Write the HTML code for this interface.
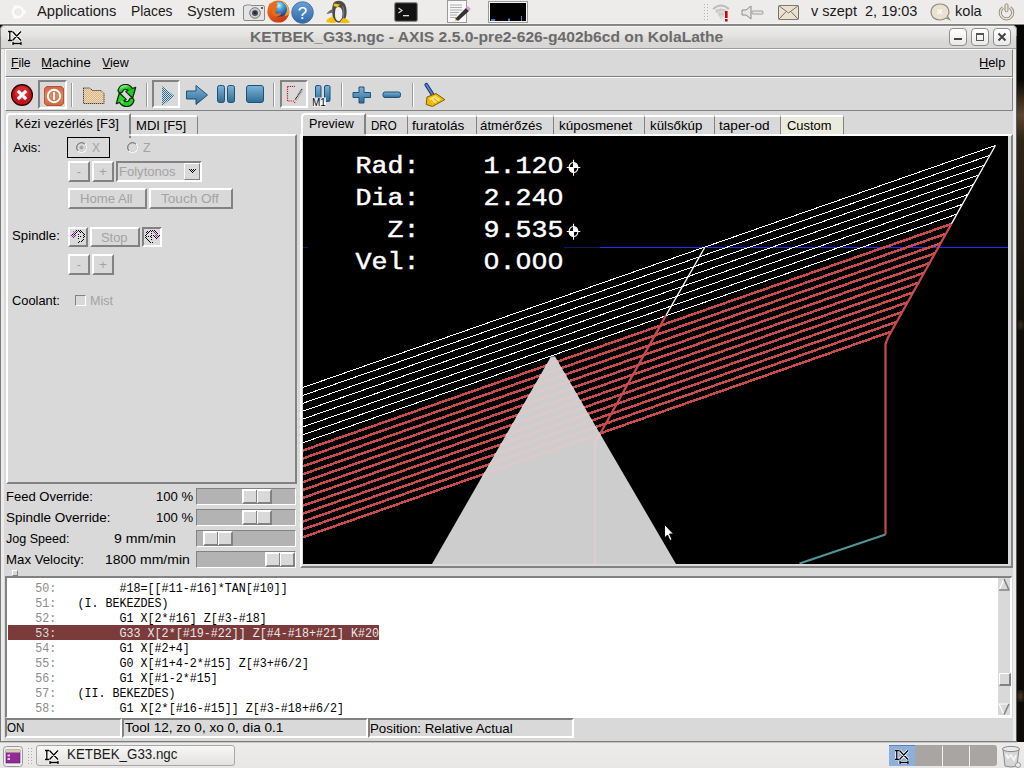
<!DOCTYPE html><html><head><meta charset="utf-8"><style>
*{margin:0;padding:0;box-sizing:content-box}
html,body{width:1024px;height:768px;overflow:hidden;background:#000}
body>div,body>svg{position:absolute}
.t{white-space:pre}
</style></head><body>
<div style="left:1017px;top:25px;width:7px;height:718px;background:linear-gradient(#050403 0px,#080604 55px,#3a2c1e 75px,#5a4630 90px,#2e2418 115px,#2a2016 150px,#1e1810 220px,#100c08 300px,#0a0806 450px,#0c0906 700px)"></div>
<div style="left:1017px;top:320px;width:7px;height:10px;background:radial-gradient(#3a2c1e,transparent)"></div>
<div style="left:1017px;top:690px;width:7px;height:12px;background:radial-gradient(#4a3828,transparent)"></div>
<div style="left:0px;top:0px;width:1024px;height:24px;background:#edecea"></div>
<div style="left:0px;top:23px;width:1024px;height:1px;background:#f4f3f2"></div>
<div style="left:0px;top:24px;width:1024px;height:1px;background:#85837f"></div>
<svg style="left:9px;top:3px" width="18" height="18" viewBox="0 0 18 18"><circle cx="9" cy="9" r="5.2" fill="none" stroke="#fbfbfb" stroke-width="2.4"/><circle cx="14.8" cy="9" r="1.9" fill="#fbfbfb"/><circle cx="6.1" cy="4" r="1.9" fill="#fbfbfb"/><circle cx="6.1" cy="14" r="1.9" fill="#fbfbfb"/></svg>
<div class="t" style="left:36.50px;top:3.66px;font-size:14.1px;line-height:14.1px;color:#1a1a1a;font-family:'Liberation Sans', sans-serif;font-weight:normal;transform:scaleX(1.0448);transform-origin:0 0;">Applications</div>
<div class="t" style="left:130.50px;top:3.66px;font-size:14.1px;line-height:14.1px;color:#1a1a1a;font-family:'Liberation Sans', sans-serif;font-weight:normal;transform:scaleX(0.9811);transform-origin:0 0;">Places</div>
<div class="t" style="left:186.80px;top:3.66px;font-size:14.1px;line-height:14.1px;color:#1a1a1a;font-family:'Liberation Sans', sans-serif;font-weight:normal;transform:scaleX(1.0208);transform-origin:0 0;">System</div>
<svg style="left:243px;top:3px" width="23" height="19" viewBox="0 0 23 19">
<rect x="0.5" y="2.5" width="21" height="15" rx="1.5" fill="#e4e4e4" stroke="#8a8a8a"/>
<rect x="3" y="1" width="5" height="2" fill="#bdbdbd"/>
<circle cx="12" cy="10" r="5.3" fill="#cfcfcf" stroke="#7a7a7a"/><circle cx="12" cy="10" r="3" fill="#4a4f57"/><rect x="10.5" y="8.5" width="3" height="2.4" fill="#1b2a55"/>
<circle cx="19" cy="5" r="1" fill="#333"/></svg>
<svg style="left:266px;top:0px" width="26" height="24" viewBox="0 0 26 24">
<defs><radialGradient id="gl" cx="0.45" cy="0.25" r="0.8"><stop offset="0" stop-color="#c8f2fc"/><stop offset="0.35" stop-color="#49a6e0"/><stop offset="0.75" stop-color="#1f5fb0"/><stop offset="1" stop-color="#0c2a78"/></radialGradient>
<linearGradient id="fx" x1="0" y1="0" x2="0.6" y2="1"><stop offset="0" stop-color="#f07a18"/><stop offset="0.6" stop-color="#e0561a"/><stop offset="1" stop-color="#c83a14"/></linearGradient>
<linearGradient id="fy" x1="0" y1="0" x2="0" y2="1"><stop offset="0" stop-color="#f4d040"/><stop offset="1" stop-color="#f08a20"/></linearGradient></defs>
<circle cx="12.3" cy="11.6" r="11" fill="url(#fx)"/>
<path d="M17 2 A11 11 0 0 1 22.8 15 L19 16 Z" fill="url(#fy)"/>
<circle cx="13.6" cy="9.2" r="7.4" fill="url(#gl)"/>
<path d="M2.5 6 L4 3 L6.5 4.5 L10 3 L11.5 5 L10 7.5 L12.5 8.5 L10 10 C8.5 11 9 13.5 11.5 13.8 L15.5 13 L14 15.5 L10 16.5 C7 16 5.5 13 6 10 L3 9Z" fill="#ea6a1c"/>
</svg>
<svg style="left:291px;top:1px" width="23" height="23" viewBox="0 0 23 23">
<defs><linearGradient id="hp" x1="0" y1="0" x2="0" y2="1"><stop offset="0" stop-color="#6aa0d6"/><stop offset="1" stop-color="#2f69a8"/></linearGradient></defs>
<circle cx="11.5" cy="11.5" r="10.8" fill="url(#hp)" stroke="#3467a0" stroke-width="0.8"/>
<text x="11.5" y="17.5" text-anchor="middle" font-family="Liberation Sans" font-size="17" fill="#fff">?</text></svg>
<svg style="left:324px;top:0px" width="28" height="24" viewBox="0 0 28 24">
<path d="M9 4 C10 1 15 0 18 1.5 C22 3.5 23 9 22.5 14 C22 19 20 22 16 22.5 C12 23 9 20 8.5 15 C8 11 8 7 9 4Z" fill="#4a4a4a"/>
<path d="M12 8 C14 6 17 7 18 10 C19 14 18.5 19 15.5 21 C13 21.5 11 19 11 15 C11 12 11 10 12 8Z" fill="#f0f0f0"/>
<path d="M18.5 6 C20 9 20 14 19 18" stroke="#777" stroke-width="1.2" fill="none"/>
<path d="M10 3.5 L16 4.5 L13.5 7.2 L9.5 6Z" fill="#f4c200"/>
<path d="M8.5 9 C6 10 3.5 12 2.5 14 C5 13.5 7 13 9 12.5Z" fill="#6a6a6a"/>
<path d="M2 21.5 C3 18.5 6 17 9 17 L12 22.5 C9 23.5 5 23 2 21.5Z" fill="#f5c000"/>
<path d="M15.5 22.5 L19 18 C22 18.5 25 20 26 22.5 C22.5 23.5 18.5 23.5 15.5 22.5Z" fill="#f5c000"/></svg>
<svg style="left:394px;top:2px" width="24" height="20" viewBox="0 0 24 20">
<rect x="0.5" y="0.5" width="23" height="19" rx="2" fill="#2b2b2b" stroke="#8a8a8a"/><rect x="2" y="2" width="20" height="16" fill="#111"/>
<path d="M4.5 6 L8 8.5 L4.5 11" fill="none" stroke="#ddd" stroke-width="1.2"/><rect x="9" y="13" width="6" height="1.3" fill="#ddd"/></svg>
<svg style="left:447px;top:0px" width="24" height="23" viewBox="0 0 24 23">
<rect x="0.5" y="0.5" width="19" height="22" fill="#f7f7f7" stroke="#9a9a9a"/>
<g stroke="#9a9a9a" stroke-width="0.8"><line x1="3" y1="5" x2="15" y2="5"/><line x1="3" y1="7.5" x2="15" y2="7.5"/><line x1="3" y1="10" x2="15" y2="10"/><line x1="3" y1="12.5" x2="12" y2="12.5"/><line x1="3" y1="15" x2="10" y2="15"/><line x1="3" y1="17.5" x2="9" y2="17.5"/></g>
<path d="M8 19 L19 8 L22 11 L11 21Z" fill="#333"/><path d="M19 8 L21 6 L24 9 L22 11Z" fill="#e89ad0"/><path d="M8 19 L11 21 L7.5 21.5Z" fill="#e8d070"/></svg>
<svg style="left:488px;top:1px" width="40" height="22" viewBox="0 0 40 22">
<rect x="0.5" y="0.5" width="39" height="21" fill="#f4f4f4" stroke="#9a9a9a"/><rect x="2" y="2" width="36" height="18" fill="#000"/>
<rect x="3" y="18" width="4" height="2" fill="#2a8fd8"/><rect x="20" y="17.5" width="2" height="2.5" fill="#2a8fd8"/><rect x="33" y="15" width="1" height="5" fill="#2a8fd8"/></svg>
<svg style="left:703px;top:3px" width="6" height="19" viewBox="0 0 6 19"><rect x="1" y="1" width="1" height="1" fill="#b8b6b3"/><rect x="1" y="4" width="1" height="1" fill="#b8b6b3"/><rect x="1" y="7" width="1" height="1" fill="#b8b6b3"/><rect x="1" y="10" width="1" height="1" fill="#b8b6b3"/><rect x="1" y="13" width="1" height="1" fill="#b8b6b3"/><rect x="1" y="16" width="1" height="1" fill="#b8b6b3"/><rect x="4" y="1" width="1" height="1" fill="#b8b6b3"/><rect x="4" y="4" width="1" height="1" fill="#b8b6b3"/><rect x="4" y="7" width="1" height="1" fill="#b8b6b3"/><rect x="4" y="10" width="1" height="1" fill="#b8b6b3"/><rect x="4" y="13" width="1" height="1" fill="#b8b6b3"/><rect x="4" y="16" width="1" height="1" fill="#b8b6b3"/></svg>
<svg style="left:711px;top:3px" width="22" height="19" viewBox="0 0 22 19">
<path d="M2 6 Q10 -1 18 6" fill="none" stroke="#bdbdbd" stroke-width="2"/><path d="M5 9 Q10 4 15 9" fill="none" stroke="#bdbdbd" stroke-width="2"/>
<path d="M7.5 12 Q10 10 12.5 12" fill="none" stroke="#bdbdbd" stroke-width="2"/><path d="M4 6 L10 17 L16 6" fill="#cfcfcf" opacity="0.7"/>
<rect x="14" y="8" width="2.6" height="7" fill="#d40000"/><rect x="14" y="16" width="2.6" height="2.5" fill="#d40000"/></svg>
<svg style="left:741px;top:5px" width="23" height="15" viewBox="0 0 23 15">
<path d="M1 5 L5 5 L10 1 L10 14 L5 10 L1 10Z" fill="#e6e6e4" stroke="#8a8a88"/><rect x="11" y="6" width="11" height="3" rx="1" fill="#e6e6e4" stroke="#8a8a88" stroke-width="0.8"/></svg>
<svg style="left:778px;top:5px" width="21" height="15" viewBox="0 0 21 17" preserveAspectRatio="none">
<rect x="0.5" y="0.5" width="20" height="16" rx="1" fill="#eae1cf" stroke="#6f6a62"/><path d="M1 1 L10.5 9 L20 1 M1 16 L8 7.5 M20 16 L13 7.5" fill="none" stroke="#6f6a62"/></svg>
<div class="t" style="left:811.00px;top:3.66px;font-size:14.1px;line-height:14.1px;color:#1a1a1a;font-family:'Liberation Sans', sans-serif;font-weight:normal;transform:scaleX(1.0290);transform-origin:0 0;">v szept  2, 19:03</div>
<svg style="left:930px;top:3px" width="21" height="19" viewBox="0 0 21 19">
<path d="M10 1 C4.5 1 1 4.5 1 9 C1 13.5 4.5 17 10 17 C13 17 14.5 16 16 15 L19.5 16.5 L17.3 13.2 C18.4 12 19 10.5 19 9 C19 4.5 15.5 1 10 1Z" fill="#ebe2cd" stroke="#8c8a85" stroke-width="1.2"/>
<path d="M7.5 6.5 L12 11 M12 6.5 L7.5 11" stroke="#fafafa" stroke-width="1.6"/></svg>
<div class="t" style="left:954.50px;top:3.66px;font-size:14.1px;line-height:14.1px;color:#1a1a1a;font-family:'Liberation Sans', sans-serif;font-weight:normal;transform:scaleX(1.0330);transform-origin:0 0;">kola</div>
<svg style="left:998px;top:3px" width="17" height="18" viewBox="0 0 17 18">
<path d="M5 4.5 A6.2 6.2 0 1 0 12 4.5" fill="none" stroke="#8f8b84" stroke-width="3.2"/><path d="M5 4.5 A6.2 6.2 0 1 0 12 4.5" fill="none" stroke="#ece3cf" stroke-width="1.4"/>
<rect x="7" y="0.8" width="3" height="8" rx="1.5" fill="#ece3cf" stroke="#8f8b84" stroke-width="1"/></svg>
<div style="left:0px;top:25px;width:6px;height:6px;background:#000"></div>
<div style="left:1011px;top:25px;width:6px;height:6px;background:#000"></div>
<div style="left:0px;top:25px;width:1017px;height:717px;background:#ebebeb;border-radius:5px 5px 0 0"></div>
<div style="left:0px;top:30px;width:1px;height:712px;background:#7c7c7c"></div>
<div style="left:1016px;top:30px;width:1px;height:712px;background:#5a5a5a"></div>
<div style="left:0px;top:741px;width:1017px;height:1px;background:#7c7c7c"></div>
<div style="left:1px;top:26px;width:1015px;height:22px;background:linear-gradient(#fafafa,#eaeae9 6%,#e4e4e3 40%,#d9d8d7 70%,#d7d6d5);border-radius:4px 4px 0 0"></div>
<div style="left:0px;top:25px;width:1015px;height:10px;border:1px solid #8d8d8d;border-bottom:none;border-radius:5px 5px 0 0"></div>
<div style="left:1px;top:48px;width:1015px;height:1px;background:#9c9c9c"></div>
<svg style="left:6px;top:29px" width="16" height="17" viewBox="0 0 16 17">
<g stroke="#fff" stroke-width="3" fill="none"><path d="M2 2.5 H6 M3.8 2.5 V11.5 M2 11.5 H6 M6.5 2.5 L15 11.5 M15 2.5 L6.5 11.5 M7 14.5 H15 M7 13 V16 M15 13 V16"/></g>
<g stroke="#000" stroke-width="1.3" fill="none"><path d="M2 2.5 H6 M3.8 2.5 V11.5 M2 11.5 H6 M6.5 2.5 L15 11.5 M15 2.5 L6.5 11.5 M7 14.5 H15 M7 13 V16 M15 13 V16"/></g></svg>
<div class="t" style="left:250.30px;top:29.86px;font-size:14.1px;line-height:14.1px;color:#6b6b6b;font-family:'Liberation Sans', sans-serif;font-weight:bold;transform:scaleX(1.1081);transform-origin:0 0;">KETBEK_G33.ngc - AXIS 2.5.0-pre2-626-g402b6cd on KolaLathe</div>
<div style="left:949px;top:28px;width:16px;height:16px;border:1px solid #8e8e8e;border-radius:4px;background:linear-gradient(#ffffff,#e9e9e9)"></div>
<div style="left:971px;top:28px;width:16px;height:16px;border:1px solid #8e8e8e;border-radius:4px;background:linear-gradient(#ffffff,#e9e9e9)"></div>
<div style="left:993px;top:28px;width:16px;height:16px;border:1px solid #8e8e8e;border-radius:4px;background:linear-gradient(#ffffff,#e9e9e9)"></div>
<div style="left:954px;top:38px;width:8px;height:2px;background:#444"></div>
<div style="left:976px;top:33px;width:6px;height:5px;border:1px solid #555;border-top-width:2px"></div>
<svg style="left:997px;top:32px" width="10" height="10" viewBox="0 0 10 10"><path d="M1.5 1.5 L8.5 8.5 M8.5 1.5 L1.5 8.5" stroke="#444" stroke-width="2"/></svg>
<div style="left:4px;top:49px;width:1009px;height:692px;background:#d9d9d9"></div>
<div style="left:5px;top:49px;width:1006px;height:26px;background:#d9d9d9;border:1px solid;border-color:#ffffff #828282 #828282 #ffffff;border-width:1px 1px 1px 1px"></div>
<div class="t" style="left:10.50px;top:56.75px;font-size:12.7px;line-height:12.7px;color:#000;font-family:'Liberation Sans', sans-serif;font-weight:normal;transform:scaleX(0.9586);transform-origin:0 0;">File</div>
<div class="t" style="left:41.20px;top:56.75px;font-size:12.7px;line-height:12.7px;color:#000;font-family:'Liberation Sans', sans-serif;font-weight:normal;transform:scaleX(1.0374);transform-origin:0 0;">Machine</div>
<div class="t" style="left:102.30px;top:56.75px;font-size:12.7px;line-height:12.7px;color:#000;font-family:'Liberation Sans', sans-serif;font-weight:normal;transform:scaleX(0.9815);transform-origin:0 0;">View</div>
<div style="left:11px;top:68px;width:8px;height:1px;background:#000"></div>
<div style="left:42px;top:68px;width:10px;height:1px;background:#000"></div>
<div style="left:103px;top:68px;width:8px;height:1px;background:#000"></div>
<div class="t" style="left:979.40px;top:56.75px;font-size:12.7px;line-height:12.7px;color:#000;font-family:'Liberation Sans', sans-serif;font-weight:normal;transform:scaleX(1.0077);transform-origin:0 0;">Help</div>
<div style="left:980px;top:68px;width:9px;height:1px;background:#000"></div>
<div style="left:5px;top:77px;width:1006px;height:32px;background:#d9d9d9;border:1px solid;border-color:#ffffff #828282 #828282 #ffffff"></div>
<svg style="left:10px;top:83px" width="24" height="24" viewBox="0 0 24 24">
<circle cx="12" cy="12" r="11" fill="#1a0000"/><circle cx="12" cy="12" r="9.8" fill="#c4121a"/><circle cx="12" cy="10" r="7" fill="#dc3a3a" opacity="0.6"/>
<path d="M7.8 7.8 L16.2 16.2 M16.2 7.8 L7.8 16.2" stroke="#fff" stroke-width="3.2"/></svg>
<div style="left:38px;top:80px;width:25px;height:25px;background:#d9d9d9;border:2px solid;border-color:#828282 #ffffff #ffffff #828282"></div>
<svg style="left:44px;top:86px" width="20" height="20" viewBox="0 0 20 20">
<defs><linearGradient id="pw" x1="0" y1="0" x2="0" y2="1"><stop offset="0" stop-color="#c66a44"/><stop offset="0.5" stop-color="#d98a66"/><stop offset="1" stop-color="#c4693f"/></linearGradient></defs>
<path d="M2.5 0.5 H17.5 L19.5 2.5 V17.5 L17.5 19.5 H2.5 L0.5 17.5 V2.5Z" fill="url(#pw)" stroke="#d04a2a" stroke-width="1"/>
<circle cx="10" cy="10" r="6.2" fill="none" stroke="#fff" stroke-width="1.9"/><rect x="9.1" y="6" width="1.8" height="8" fill="#fff"/></svg>
<div style="left:71px;top:83px;width:1px;height:24px;background:#9a9a9a"></div>
<div style="left:72px;top:83px;width:1px;height:24px;background:#ffffff"></div>
<svg style="left:82px;top:85px" width="24" height="21" viewBox="0 0 24 21">
<defs><pattern id="fp" width="2" height="2" patternUnits="userSpaceOnUse"><rect width="2" height="2" fill="#efd9b8"/><rect width="1" height="1" fill="#d9b888"/><rect x="1" y="1" width="1" height="1" fill="#d9b888"/></pattern></defs>
<path d="M1.5 3 L8 3 L10.5 5.5 L19 5.5 L22 8.5 L22 18.5 L1.5 18.5Z" fill="url(#fp)" stroke="#111" stroke-width="1" stroke-dasharray="1 1"/></svg>
<svg style="left:115px;top:84px" width="22" height="23" viewBox="0 0 22 23">
<defs><linearGradient id="gr" x1="0" y1="0" x2="1" y2="1"><stop offset="0" stop-color="#8ef08e"/><stop offset="0.5" stop-color="#22cc22"/><stop offset="1" stop-color="#0fa00f"/></linearGradient></defs>
<g id="ra"><path d="M5.5 6.5 C7 2 13 1.5 15.5 6" fill="none" stroke="#0a2a0a" stroke-width="6" stroke-linecap="round"/>
<path d="M11 7.5 L20.5 3.5 L17.5 14Z" fill="#0a2a0a" stroke="#0a2a0a" stroke-width="1.6" stroke-linejoin="round"/>
<path d="M5.5 6.5 C7 2 13 1.5 15.5 6" fill="none" stroke="url(#gr)" stroke-width="3.6" stroke-linecap="round"/>
<path d="M11.5 7.8 L19.8 4.3 L17.3 12.8Z" fill="#22cc22"/></g>
<g transform="rotate(180 11 11.5)"><path d="M5.5 6.5 C7 2 13 1.5 15.5 6" fill="none" stroke="#0a2a0a" stroke-width="6" stroke-linecap="round"/>
<path d="M11 7.5 L20.5 3.5 L17.5 14Z" fill="#0a2a0a" stroke="#0a2a0a" stroke-width="1.6" stroke-linejoin="round"/>
<path d="M5.5 6.5 C7 2 13 1.5 15.5 6" fill="none" stroke="#22cc22" stroke-width="3.6" stroke-linecap="round"/>
<path d="M11.5 7.8 L19.8 4.3 L17.3 12.8Z" fill="#2ad42a"/><circle cx="15" cy="5" r="1.5" fill="#9af09a" opacity="0.6"/></g></svg>
<div style="left:146px;top:83px;width:1px;height:24px;background:#9a9a9a"></div>
<div style="left:147px;top:83px;width:1px;height:24px;background:#ffffff"></div>
<div style="left:152px;top:80px;width:24px;height:24px;background:#d9d9d9;border:2px solid;border-color:#828282 #ffffff #ffffff #828282"></div>
<svg style="left:161px;top:85px" width="15" height="22" viewBox="0 0 15 22">
<defs><pattern id="dp" width="2" height="2" patternUnits="userSpaceOnUse"><rect width="1" height="1" fill="#2d6f9a"/><rect x="1" y="1" width="1" height="1" fill="#2d6f9a"/></pattern></defs>
<path d="M1 1 L13.5 11 L1 21Z" fill="url(#dp)"/></svg>
<svg style="left:185px;top:84px" width="24" height="22" viewBox="0 0 24 22">
<defs><linearGradient id="bl" x1="0" y1="0" x2="0" y2="1"><stop offset="0" stop-color="#7fb4d8"/><stop offset="1" stop-color="#2c6d96"/></linearGradient></defs>
<path d="M1.5 7 L11 7 L11 1.5 L22.5 11 L11 20.5 L11 15 L1.5 15Z" fill="url(#bl)" stroke="#1d5176" stroke-width="1"/></svg>
<svg style="left:217px;top:85px" width="19" height="19" viewBox="0 0 19 19">
<rect x="0.5" y="0.5" width="7" height="17" rx="2" fill="url(#bl)" stroke="#1d5176"/><rect x="10.5" y="0.5" width="7" height="17" rx="2" fill="url(#bl)" stroke="#1d5176"/></svg>
<svg style="left:246px;top:85px" width="19" height="19" viewBox="0 0 19 19">
<rect x="0.5" y="0.5" width="17" height="17" rx="2.5" fill="url(#bl)" stroke="#1d5176"/></svg>
<div style="left:273px;top:83px;width:1px;height:24px;background:#9a9a9a"></div>
<div style="left:274px;top:83px;width:1px;height:24px;background:#ffffff"></div>
<div style="left:280px;top:80px;width:24px;height:24px;background:#d9d9d9;border:2px solid;border-color:#828282 #ffffff #ffffff #828282"></div>
<svg style="left:285px;top:85px" width="20" height="20" viewBox="0 0 20 20">
<path d="M2.5 1.5 L10 1.5 M2.5 1.5 L2.5 16 L9 16 L10 18" fill="none" stroke="#e01010" stroke-width="1.2" stroke-dasharray="1.2 1"/>
<path d="M17 4 L10 15" stroke="#222" stroke-width="1.3" stroke-dasharray="1 0.6"/><path d="M18 5.5 L11 16" stroke="#aaa" stroke-width="0.8"/></svg>
<svg style="left:312px;top:85px" width="22" height="22" viewBox="0 0 22 22">
<rect x="3.5" y="0.5" width="5.5" height="16" rx="1.5" fill="url(#bl)" stroke="#1d5176"/><rect x="12.5" y="0.5" width="5.5" height="16" rx="1.5" fill="url(#bl)" stroke="#1d5176"/>
<rect x="0" y="12.5" width="14" height="9" fill="#fff" opacity="0.85"/>
<text x="0" y="21" font-family="Liberation Sans" font-size="10" fill="#000">M1</text></svg>
<div style="left:341px;top:83px;width:1px;height:24px;background:#9a9a9a"></div>
<div style="left:342px;top:83px;width:1px;height:24px;background:#ffffff"></div>
<svg style="left:352px;top:86px" width="20" height="18" viewBox="0 0 20 18">
<path d="M7 1 L12 1 L12 6.5 L18.5 6.5 L18.5 11.5 L12 11.5 L12 17 L7 17 L7 11.5 L1 11.5 L1 6.5 L7 6.5Z" fill="url(#bl)" stroke="#1d5176" stroke-linejoin="round"/></svg>
<svg style="left:382px;top:91px" width="20" height="8" viewBox="0 0 20 8">
<rect x="1" y="1" width="17.5" height="5.5" rx="2" fill="url(#bl)" stroke="#1d5176"/></svg>
<div style="left:412px;top:83px;width:1px;height:24px;background:#9a9a9a"></div>
<div style="left:413px;top:83px;width:1px;height:24px;background:#ffffff"></div>
<svg style="left:422px;top:82px" width="24" height="27" viewBox="0 0 24 27">
<path d="M4.3 2.8 L11.5 14" stroke="#17306e" stroke-width="3.8" stroke-linecap="round"/><path d="M4.3 2.8 L11.5 14" stroke="#5b86d6" stroke-width="1.8" stroke-linecap="round"/>
<path d="M5 15 L14 11.5 L22.8 17.6 L10.5 24.5 L4.2 22.5Z" fill="#f2b800" stroke="#6e5200" stroke-width="0.9" stroke-linejoin="round"/>
<path d="M7 16.5 L13.5 13.5 L19 17.5 L11 22Z" fill="#fde26a"/><path d="M9 18 L13 23 M12 16.5 L17 21" stroke="#c88a00" stroke-width="0.8"/></svg>
<div style="left:6px;top:134px;width:287px;height:346px;background:#d9d9d9;border:2px solid;border-color:#ffffff #828282 #828282 #ffffff"></div>
<div style="left:131px;top:115px;width:66px;height:17px;background:#d9d9d9;border:solid;border-width:2px 1px 0 0;border-color:#ffffff #828282;border-top-right-radius:3px"></div>
<div class="t" style="left:136.10px;top:120.15px;font-size:12.7px;line-height:12.7px;color:#000;font-family:'Liberation Sans', sans-serif;font-weight:normal;transform:scaleX(1.0307);transform-origin:0 0;">MDI [F5]</div>
<div style="left:6px;top:113px;width:121px;height:23px;background:#d9d9d9;border:solid;border-width:2px 2px 0 2px;border-color:#ffffff #828282 #ffffff #ffffff;border-top-left-radius:4px"></div>
<div class="t" style="left:14.60px;top:117.75px;font-size:12.7px;line-height:12.7px;color:#000;font-family:'Liberation Sans', sans-serif;font-weight:normal;transform:scaleX(1.0307);transform-origin:0 0;">Kézi vezérlés [F3]</div>
<div style="left:129px;top:134px;width:2px;height:2px;background:#d9d9d9"></div>
<div class="t" style="left:13.20px;top:141.65px;font-size:12.7px;line-height:12.7px;color:#000;font-family:'Liberation Sans', sans-serif;font-weight:normal;">Axis:</div>
<div style="left:67px;top:137px;width:41px;height:19px;border:1px solid #000"></div>
<svg style="left:74.5px;top:140.5px" width="13" height="13" viewBox="0 0 13 13"><circle cx="6.5" cy="6.5" r="4.8" fill="#d9d9d9" stroke="#5a5a5a"/><path d="M10 3 A4.8 4.8 0 0 1 3 10" fill="none" stroke="#fff" stroke-width="1.2"/><circle cx="6.5" cy="6.5" r="2" fill="#a8a8a8"/></svg>
<div class="t" style="left:91.50px;top:141.75px;font-size:12.7px;line-height:12.7px;color:#a3a3a3;font-family:'Liberation Sans', sans-serif;font-weight:normal;transform:scaleX(0.9473);transform-origin:0 0;">X</div>
<svg style="left:125.5px;top:140.5px" width="13" height="13" viewBox="0 0 13 13"><circle cx="6.5" cy="6.5" r="4.8" fill="#d9d9d9" stroke="#5a5a5a"/><path d="M10 3 A4.8 4.8 0 0 1 3 10" fill="none" stroke="#fff" stroke-width="1.2"/></svg>
<div class="t" style="left:142.50px;top:141.75px;font-size:12.7px;line-height:12.7px;color:#a3a3a3;font-family:'Liberation Sans', sans-serif;font-weight:normal;transform:scaleX(0.9681);transform-origin:0 0;">Z</div>
<div style="left:68px;top:161px;width:18px;height:17px;background:#d9d9d9;border:2px solid;border-color:#ffffff #828282 #828282 #ffffff"></div>
<div class="t" style="left:76.70px;top:166.15px;font-size:12.7px;line-height:12.7px;color:#a3a3a3;font-family:'Liberation Sans', sans-serif;font-weight:normal;">-</div>
<div style="left:92px;top:161px;width:18px;height:17px;background:#d9d9d9;border:2px solid;border-color:#ffffff #828282 #828282 #ffffff"></div>
<div class="t" style="left:98.70px;top:166.15px;font-size:12.7px;line-height:12.7px;color:#a3a3a3;font-family:'Liberation Sans', sans-serif;font-weight:normal;transform:scaleX(1.0768);transform-origin:0 0;">+</div>
<div style="left:116px;top:161px;width:82px;height:17px;background:#d9d9d9;border:2px solid;border-color:#828282 #ffffff #ffffff #828282"></div>
<div class="t" style="left:118.60px;top:166.15px;font-size:12.7px;line-height:12.7px;color:#a3a3a3;font-family:'Liberation Sans', sans-serif;font-weight:normal;transform:scaleX(1.0281);transform-origin:0 0;">Folytonos</div>
<div style="left:184px;top:163px;width:14px;height:15px;background:#d9d9d9;border:1px solid;border-color:#ffffff #828282 #828282 #ffffff"></div>
<svg style="left:186px;top:166px" width="12" height="10" viewBox="186 166 12 10" shape-rendering="crispEdges"><rect x="189" y="169" width="1" height="1" fill="#000"/><rect x="191" y="169" width="1" height="1" fill="#000"/><rect x="193" y="169" width="1" height="1" fill="#000"/><rect x="195" y="169" width="1" height="1" fill="#000"/><rect x="190" y="170" width="1" height="1" fill="#000"/><rect x="192" y="170" width="1" height="1" fill="#000"/><rect x="194" y="170" width="1" height="1" fill="#000"/><rect x="191" y="171" width="1" height="1" fill="#000"/><rect x="193" y="171" width="1" height="1" fill="#000"/><rect x="192" y="172" width="1" height="1" fill="#000"/></svg>
<div style="left:68px;top:188px;width:75px;height:17px;background:#d9d9d9;border:2px solid;border-color:#ffffff #828282 #828282 #ffffff"></div>
<div class="t" style="left:80.40px;top:192.75px;font-size:12.7px;line-height:12.7px;color:#a3a3a3;font-family:'Liberation Sans', sans-serif;font-weight:normal;transform:scaleX(1.0335);transform-origin:0 0;">Home All</div>
<div style="left:149px;top:188px;width:80px;height:17px;background:#d9d9d9;border:2px solid;border-color:#ffffff #828282 #828282 #ffffff"></div>
<div class="t" style="left:161.40px;top:192.75px;font-size:12.7px;line-height:12.7px;color:#a3a3a3;font-family:'Liberation Sans', sans-serif;font-weight:normal;transform:scaleX(1.0708);transform-origin:0 0;">Touch Off</div>
<div class="t" style="left:11.50px;top:229.95px;font-size:12.7px;line-height:12.7px;color:#000;font-family:'Liberation Sans', sans-serif;font-weight:normal;transform:scaleX(1.0433);transform-origin:0 0;">Spindle:</div>
<div style="left:68px;top:227px;width:16px;height:16px;background:#d9d9d9;border:2px solid;border-color:#ffffff #828282 #828282 #ffffff"></div>
<svg style="left:68px;top:227px" width="20" height="20" viewBox="68 227 20 20" shape-rendering="crispEdges"><rect x="76" y="230" width="1" height="1" fill="#000"/><rect x="78" y="230" width="1" height="1" fill="#000"/><rect x="80" y="230" width="1" height="1" fill="#000"/><rect x="79" y="231" width="1" height="1" fill="#000"/><rect x="81" y="231" width="1" height="1" fill="#000"/><rect x="76" y="232" width="1" height="1" fill="#000"/><rect x="80" y="232" width="1" height="1" fill="#000"/><rect x="82" y="232" width="1" height="1" fill="#000"/><rect x="75" y="233" width="1" height="1" fill="#000"/><rect x="83" y="233" width="1" height="1" fill="#000"/><rect x="72" y="234" width="1" height="1" fill="#000"/><rect x="74" y="234" width="1" height="1" fill="#000"/><rect x="78" y="234" width="1" height="1" fill="#000"/><rect x="84" y="234" width="1" height="1" fill="#000"/><rect x="83" y="235" width="1" height="1" fill="#000"/><rect x="78" y="236" width="1" height="1" fill="#000"/><rect x="80" y="236" width="1" height="1" fill="#000"/><rect x="84" y="236" width="1" height="1" fill="#000"/><rect x="83" y="237" width="1" height="1" fill="#000"/><rect x="78" y="238" width="1" height="1" fill="#000"/><rect x="83" y="239" width="1" height="1" fill="#000"/><rect x="82" y="240" width="1" height="1" fill="#000"/><rect x="79" y="241" width="1" height="1" fill="#000"/><rect x="81" y="241" width="1" height="1" fill="#000"/><rect x="78" y="242" width="1" height="1" fill="#000"/><rect x="75" y="231" width="1" height="1" fill="#a010b0"/><rect x="77" y="231" width="1" height="1" fill="#a010b0"/><rect x="74" y="232" width="1" height="1" fill="#a010b0"/><rect x="73" y="233" width="1" height="1" fill="#a010b0"/><rect x="71" y="235" width="1" height="1" fill="#a010b0"/><rect x="73" y="235" width="1" height="1" fill="#a010b0"/><rect x="75" y="235" width="1" height="1" fill="#a010b0"/><rect x="72" y="236" width="1" height="1" fill="#a010b0"/><rect x="74" y="236" width="1" height="1" fill="#a010b0"/><rect x="73" y="237" width="1" height="1" fill="#a010b0"/><rect x="73" y="231" width="1" height="1" fill="#888"/></svg>
<div style="left:90px;top:227px;width:46px;height:16px;background:#d9d9d9;border:2px solid;border-color:#ffffff #828282 #828282 #ffffff"></div>
<div class="t" style="left:100.70px;top:231.75px;font-size:12.7px;line-height:12.7px;color:#a3a3a3;font-family:'Liberation Sans', sans-serif;font-weight:normal;transform:scaleX(1.0154);transform-origin:0 0;">Stop</div>
<div style="left:142px;top:227px;width:16px;height:16px;background:#d9d9d9;border:2px solid;border-color:#828282 #ffffff #ffffff #828282"></div>
<svg style="left:142px;top:227px" width="20" height="20" viewBox="142 227 20 20" shape-rendering="crispEdges"><rect x="150" y="230" width="1" height="1" fill="#000"/><rect x="152" y="230" width="1" height="1" fill="#000"/><rect x="154" y="230" width="1" height="1" fill="#000"/><rect x="147" y="231" width="1" height="1" fill="#000"/><rect x="149" y="231" width="1" height="1" fill="#000"/><rect x="151" y="231" width="1" height="1" fill="#000"/><rect x="155" y="231" width="1" height="1" fill="#000"/><rect x="146" y="232" width="1" height="1" fill="#000"/><rect x="148" y="232" width="1" height="1" fill="#000"/><rect x="156" y="232" width="1" height="1" fill="#000"/><rect x="147" y="233" width="1" height="1" fill="#000"/><rect x="151" y="233" width="1" height="1" fill="#000"/><rect x="157" y="233" width="1" height="1" fill="#000"/><rect x="146" y="234" width="1" height="1" fill="#000"/><rect x="145" y="235" width="1" height="1" fill="#000"/><rect x="151" y="235" width="1" height="1" fill="#000"/><rect x="153" y="235" width="1" height="1" fill="#000"/><rect x="159" y="235" width="1" height="1" fill="#000"/><rect x="146" y="236" width="1" height="1" fill="#000"/><rect x="148" y="236" width="1" height="1" fill="#000"/><rect x="150" y="236" width="1" height="1" fill="#000"/><rect x="154" y="236" width="1" height="1" fill="#000"/><rect x="158" y="236" width="1" height="1" fill="#000"/><rect x="145" y="237" width="1" height="1" fill="#000"/><rect x="151" y="237" width="1" height="1" fill="#000"/><rect x="155" y="237" width="1" height="1" fill="#000"/><rect x="146" y="238" width="1" height="1" fill="#000"/><rect x="156" y="238" width="1" height="1" fill="#000"/><rect x="147" y="239" width="1" height="1" fill="#000"/><rect x="151" y="239" width="1" height="1" fill="#000"/><rect x="148" y="240" width="1" height="1" fill="#000"/><rect x="149" y="241" width="1" height="1" fill="#000"/><rect x="150" y="242" width="1" height="1" fill="#000"/><rect x="152" y="242" width="1" height="1" fill="#000"/><rect x="153" y="231" width="1" height="1" fill="#a010b0"/><rect x="154" y="232" width="1" height="1" fill="#a010b0"/><rect x="155" y="233" width="1" height="1" fill="#a010b0"/><rect x="156" y="234" width="1" height="1" fill="#a010b0"/><rect x="155" y="235" width="1" height="1" fill="#a010b0"/><rect x="157" y="235" width="1" height="1" fill="#a010b0"/><rect x="156" y="236" width="1" height="1" fill="#a010b0"/><rect x="157" y="237" width="1" height="1" fill="#700000"/></svg>
<div style="left:68px;top:254px;width:18px;height:17px;background:#d9d9d9;border:2px solid;border-color:#ffffff #828282 #828282 #ffffff"></div>
<div class="t" style="left:76.70px;top:259.15px;font-size:12.7px;line-height:12.7px;color:#a3a3a3;font-family:'Liberation Sans', sans-serif;font-weight:normal;">-</div>
<div style="left:92px;top:254px;width:18px;height:17px;background:#d9d9d9;border:2px solid;border-color:#ffffff #828282 #828282 #ffffff"></div>
<div class="t" style="left:98.70px;top:259.15px;font-size:12.7px;line-height:12.7px;color:#a3a3a3;font-family:'Liberation Sans', sans-serif;font-weight:normal;transform:scaleX(1.0768);transform-origin:0 0;">+</div>
<div class="t" style="left:11.50px;top:294.65px;font-size:12.7px;line-height:12.7px;color:#000;font-family:'Liberation Sans', sans-serif;font-weight:normal;transform:scaleX(1.0125);transform-origin:0 0;">Coolant:</div>
<div style="left:75px;top:295px;width:9px;height:9px;background:#d9d9d9;border:1px solid;border-color:#828282 #ffffff #ffffff #828282"></div>
<div class="t" style="left:89.70px;top:294.65px;font-size:12.7px;line-height:12.7px;color:#a3a3a3;font-family:'Liberation Sans', sans-serif;font-weight:normal;transform:scaleX(0.9869);transform-origin:0 0;">Mist</div>
<div class="t" style="left:5.70px;top:490.85px;font-size:12.7px;line-height:12.7px;color:#000;font-family:'Liberation Sans', sans-serif;font-weight:normal;transform:scaleX(1.0270);transform-origin:0 0;">Feed Override:</div>
<div style="left:196px;top:488px;width:98px;height:15px;background:#b3b3b3;border:1px solid;border-color:#828282 #ffffff #ffffff #828282"></div>
<div style="left:242px;top:489px;width:26px;height:11px;background:#d9d9d9;border:2px solid;border-color:#fff #828282 #828282 #fff"></div>
<div style="left:256px;top:490px;width:1px;height:13px;background:#828282"></div>
<div style="left:257px;top:490px;width:1px;height:13px;background:#ffffff"></div>
<div class="t" style="left:5.70px;top:512.05px;font-size:12.7px;line-height:12.7px;color:#000;font-family:'Liberation Sans', sans-serif;font-weight:normal;transform:scaleX(1.0652);transform-origin:0 0;">Spindle Override:</div>
<div style="left:196px;top:509px;width:98px;height:15px;background:#b3b3b3;border:1px solid;border-color:#828282 #ffffff #ffffff #828282"></div>
<div style="left:242px;top:510px;width:26px;height:11px;background:#d9d9d9;border:2px solid;border-color:#fff #828282 #828282 #fff"></div>
<div style="left:256px;top:511px;width:1px;height:13px;background:#828282"></div>
<div style="left:257px;top:511px;width:1px;height:13px;background:#ffffff"></div>
<div class="t" style="left:5.70px;top:533.35px;font-size:12.7px;line-height:12.7px;color:#000;font-family:'Liberation Sans', sans-serif;font-weight:normal;transform:scaleX(0.9881);transform-origin:0 0;">Jog Speed:</div>
<div style="left:196px;top:530px;width:98px;height:15px;background:#b3b3b3;border:1px solid;border-color:#828282 #ffffff #ffffff #828282"></div>
<div style="left:203px;top:531px;width:26px;height:11px;background:#d9d9d9;border:2px solid;border-color:#fff #828282 #828282 #fff"></div>
<div style="left:217px;top:532px;width:1px;height:13px;background:#828282"></div>
<div style="left:218px;top:532px;width:1px;height:13px;background:#ffffff"></div>
<div class="t" style="left:5.70px;top:553.65px;font-size:12.7px;line-height:12.7px;color:#000;font-family:'Liberation Sans', sans-serif;font-weight:normal;transform:scaleX(1.0427);transform-origin:0 0;">Max Velocity:</div>
<div style="left:196px;top:551px;width:98px;height:15px;background:#b3b3b3;border:1px solid;border-color:#828282 #ffffff #ffffff #828282"></div>
<div style="left:265px;top:552px;width:26px;height:11px;background:#d9d9d9;border:2px solid;border-color:#fff #828282 #828282 #fff"></div>
<div style="left:279px;top:553px;width:1px;height:13px;background:#828282"></div>
<div style="left:280px;top:553px;width:1px;height:13px;background:#ffffff"></div>
<div class="t" style="left:155.80px;top:490.75px;font-size:12.7px;line-height:12.7px;color:#000;font-family:'Liberation Sans', sans-serif;font-weight:normal;transform:scaleX(1.0332);transform-origin:0 0;">100 %</div>
<div class="t" style="left:155.80px;top:511.95px;font-size:12.7px;line-height:12.7px;color:#000;font-family:'Liberation Sans', sans-serif;font-weight:normal;transform:scaleX(1.0332);transform-origin:0 0;">100 %</div>
<div class="t" style="left:114.40px;top:532.75px;font-size:12.7px;line-height:12.7px;color:#000;font-family:'Liberation Sans', sans-serif;font-weight:normal;transform:scaleX(1.1103);transform-origin:0 0;">9 mm/min</div>
<div class="t" style="left:105.10px;top:553.85px;font-size:12.7px;line-height:12.7px;color:#000;font-family:'Liberation Sans', sans-serif;font-weight:normal;transform:scaleX(1.1031);transform-origin:0 0;">1800 mm/min</div>
<div style="left:12px;top:570px;width:5px;height:5px;border:1px solid #828282;border-color:#fff #828282 #828282 #fff;width:4px;height:4px"></div>
<div style="left:300px;top:134px;width:709px;height:430px;background:#d9d9d9;border:2px solid;border-color:#ffffff #828282 #828282 #ffffff"></div>
<div style="left:367px;top:115px;width:40px;height:17px;background:#d9d9d9;border:solid;border-width:2px 1px 0 0;border-color:#ffffff #828282;border-top-right-radius:3px"></div>
<div class="t" style="left:370.50px;top:119.65px;font-size:12.7px;line-height:12.7px;color:#000;font-family:'Liberation Sans', sans-serif;font-weight:normal;transform:scaleX(0.9115);transform-origin:0 0;">DRO</div>
<div style="left:408px;top:115px;width:68px;height:17px;background:#d9d9d9;border:solid;border-width:2px 1px 0 0;border-color:#ffffff #828282;border-top-right-radius:3px"></div>
<div class="t" style="left:412.30px;top:119.65px;font-size:12.7px;line-height:12.7px;color:#000;font-family:'Liberation Sans', sans-serif;font-weight:normal;transform:scaleX(1.0759);transform-origin:0 0;">furatolás</div>
<div style="left:477px;top:115px;width:76px;height:17px;background:#d9d9d9;border:solid;border-width:2px 1px 0 0;border-color:#ffffff #828282;border-top-right-radius:3px"></div>
<div class="t" style="left:480.20px;top:119.65px;font-size:12.7px;line-height:12.7px;color:#000;font-family:'Liberation Sans', sans-serif;font-weight:normal;transform:scaleX(1.0487);transform-origin:0 0;">átmérőzés</div>
<div style="left:554px;top:115px;width:90px;height:17px;background:#d9d9d9;border:solid;border-width:2px 1px 0 0;border-color:#ffffff #828282;border-top-right-radius:3px"></div>
<div class="t" style="left:558.80px;top:119.65px;font-size:12.7px;line-height:12.7px;color:#000;font-family:'Liberation Sans', sans-serif;font-weight:normal;transform:scaleX(1.0605);transform-origin:0 0;">kúposmenet</div>
<div style="left:645px;top:115px;width:69px;height:17px;background:#d9d9d9;border:solid;border-width:2px 1px 0 0;border-color:#ffffff #828282;border-top-right-radius:3px"></div>
<div class="t" style="left:649.80px;top:119.65px;font-size:12.7px;line-height:12.7px;color:#000;font-family:'Liberation Sans', sans-serif;font-weight:normal;transform:scaleX(1.0459);transform-origin:0 0;">külsőkúp</div>
<div style="left:715px;top:115px;width:65px;height:17px;background:#d9d9d9;border:solid;border-width:2px 1px 0 0;border-color:#ffffff #828282;border-top-right-radius:3px"></div>
<div class="t" style="left:719.00px;top:119.65px;font-size:12.7px;line-height:12.7px;color:#000;font-family:'Liberation Sans', sans-serif;font-weight:normal;transform:scaleX(1.0717);transform-origin:0 0;">taper-od</div>
<div style="left:781px;top:115px;width:62px;height:17px;background:#ebebdd;border:solid;border-width:2px 1px 0 0;border-color:#ffffff #828282;border-top-right-radius:3px"></div>
<div class="t" style="left:786.50px;top:119.65px;font-size:12.7px;line-height:12.7px;color:#000;font-family:'Liberation Sans', sans-serif;font-weight:normal;transform:scaleX(1.0194);transform-origin:0 0;">Custom</div>
<div style="left:301px;top:113px;width:61px;height:23px;background:#d9d9d9;border:solid;border-width:2px 2px 0 2px;border-color:#ffffff #828282 #ffffff #ffffff;border-top-left-radius:4px"></div>
<div class="t" style="left:308.50px;top:117.95px;font-size:12.7px;line-height:12.7px;color:#000;font-family:'Liberation Sans', sans-serif;font-weight:normal;transform:scaleX(0.9909);transform-origin:0 0;">Preview</div>
<div style="left:364px;top:134px;width:2px;height:2px;background:#d9d9d9"></div>
<svg style="left:303px;top:136px" width="705" height="428" viewBox="0 0 705 428"><rect width="705" height="428" fill="#000"/><rect x="297" y="111" width="408" height="1" fill="#2828ff"/><rect x="0" y="111" width="5" height="1" fill="#161660"/><rect x="261" y="111" width="36" height="1" fill="#161660"/><path d="M0.00,251.50 L692.38,9.51 M0.00,259.38 L686.88,19.31 M0.00,267.26 L681.39,29.12 M0.00,275.14 L675.89,38.92 M0.00,283.02 L670.39,48.72 M0.00,290.90 L664.90,58.52 M0.00,298.78 L659.40,68.32 M0.00,306.66 L653.90,78.12" stroke="#ffffff" stroke-width="1" fill="none" shape-rendering="crispEdges"/><path d="M0.00,314.54 L648.41,87.92 M0.00,322.42 L642.91,97.72 M0.00,330.30 L637.41,107.52 M0.00,338.18 L631.92,117.32 M0.00,346.06 L626.42,127.13 M0.00,353.94 L620.92,136.93 M0.00,361.82 L615.43,146.73 M0.00,369.70 L609.93,156.53 M0.00,377.58 L604.43,166.33 M0.00,385.46 L598.94,176.13 M0.00,393.34 L593.44,185.93 M0.00,401.22 L587.94,195.73" stroke="#c94a4a" stroke-width="2.5" fill="none" shape-rendering="crispEdges"/><path d="M692.50,9.30 L648.41,87.92" stroke="#fff" stroke-width="1.3" fill="none"/><path d="M648.41,87.92 L585.00,201.50 L582.50,208.00 L582.50,398.50" stroke="#c94a4a" stroke-width="2.2" fill="none"/><path d="M582.50,398.50 L496.50,427.50" stroke="#4f9494" stroke-width="2.2" fill="none"/><path d="M401.70,111.50 L363.00,179.40" stroke="#fff" stroke-width="1.3" fill="none"/><path d="M363.00,179.40 L297.50,297.00 L292.00,306.00 L292.00,428.00" stroke="#c94a4a" stroke-width="2.2" fill="none"/><defs><clipPath id="tc"><path d="M248.00,220.50 L252.00,220.50 L373.00,428.00 L129.00,428.00Z"/></clipPath></defs><path d="M248.00,220.50 L252.00,220.50 L373.00,428.00 L129.00,428.00Z" fill="#cdcdcd"/><g clip-path="url(#tc)"><path d="M0.00,314.54 L648.41,87.92 M0.00,322.42 L642.91,97.72 M0.00,330.30 L637.41,107.52 M0.00,338.18 L631.92,117.32 M0.00,346.06 L626.42,127.13 M0.00,353.94 L620.92,136.93 M0.00,361.82 L615.43,146.73 M0.00,369.70 L609.93,156.53 M0.00,377.58 L604.43,166.33 M0.00,385.46 L598.94,176.13 M0.00,393.34 L593.44,185.93 M0.00,401.22 L587.94,195.73" stroke="#dccaca" stroke-width="2.9" fill="none" shape-rendering="crispEdges"/><path d="M0.00,251.50 L692.38,9.51 M0.00,259.38 L686.88,19.31 M0.00,267.26 L681.39,29.12 M0.00,275.14 L675.89,38.92 M0.00,283.02 L670.39,48.72 M0.00,290.90 L664.90,58.52 M0.00,298.78 L659.40,68.32 M0.00,306.66 L653.90,78.12" stroke="#e2e2e2" stroke-width="1.2" fill="none" shape-rendering="crispEdges"/><path d="M363.00,179.40 L297.50,297.00 L292.00,306.00 L292.00,428.00" stroke="#e0cccc" stroke-width="2.2" fill="none"/></g><path d="M361.50,388.50 L361.50,402.00 L364.50,399.00 L367.00,404.50 L369.00,403.50 L366.50,398.00 L370.50,398.00Z" fill="#fff" stroke="#000" stroke-width="0.9"/><g transform="translate(270.5,31.5)"><ellipse rx="4.4" ry="5" fill="#000" stroke="#fff" stroke-width="1.1"/><path d="M0 0 L0 -5 A4.4 5 0 0 1 4.4 0Z M0 0 L0 5 A4.4 5 0 0 1 -4.4 0Z" fill="#fff"/><path d="M-6.8 0 H6.8 M0 -7.8 V8.2" stroke="#fff" stroke-width="1.1"/></g><g transform="translate(270.5,95.5)"><ellipse rx="4.4" ry="5" fill="#000" stroke="#fff" stroke-width="1.1"/><path d="M0 0 L0 -5 A4.4 5 0 0 1 4.4 0Z M0 0 L0 5 A4.4 5 0 0 1 -4.4 0Z" fill="#fff"/><path d="M-6.8 0 H6.8 M0 -7.8 V8.2" stroke="#fff" stroke-width="1.1"/></g></svg>
<div class="t" style="left:355.50px;top:153.36px;font-size:26.67px;line-height:26.67px;color:#ffffff;font-family:'Liberation Mono', monospace;font-weight:normal;transform:scaleY(0.93);transform-origin:0 80%;-webkit-text-stroke:0.5px #fff;">Rad:    1.120</div>
<div class="t" style="left:355.50px;top:184.96px;font-size:26.67px;line-height:26.67px;color:#ffffff;font-family:'Liberation Mono', monospace;font-weight:normal;transform:scaleY(0.93);transform-origin:0 80%;-webkit-text-stroke:0.5px #fff;">Dia:    2.240</div>
<div class="t" style="left:355.50px;top:216.96px;font-size:26.67px;line-height:26.67px;color:#ffffff;font-family:'Liberation Mono', monospace;font-weight:normal;transform:scaleY(0.93);transform-origin:0 80%;-webkit-text-stroke:0.5px #fff;">  Z:    9.535</div>
<div class="t" style="left:355.50px;top:248.76px;font-size:26.67px;line-height:26.67px;color:#ffffff;font-family:'Liberation Mono', monospace;font-weight:normal;transform:scaleY(0.93);transform-origin:0 80%;-webkit-text-stroke:0.5px #fff;">Vel:    0.000</div>
<div style="left:5px;top:576px;width:1004px;height:139px;background:#fff;border:solid;border-width:2px 1px 1px 2px;border-color:#828282 #ffffff #ffffff #828282"></div>
<div style="left:8px;top:625px;width:371px;height:15px;background:#7b3b3b"></div>
<div class="t" style="left:35.3px;top:583.83px;font-size:11.700px;line-height:11.700px;color:#8c8c8c;font-family:'Liberation Mono',monospace;transform:scaleY(1.12);transform-origin:0 8.97px">50:</div>
<div class="t" style="left:119.54px;top:583.83px;font-size:11.700px;line-height:11.700px;color:#000;font-family:'Liberation Mono',monospace;transform:scaleY(1.12);transform-origin:0 8.97px">#18=[[#11-#16]*TAN[#10]]</div>
<div class="t" style="left:35.3px;top:598.83px;font-size:11.700px;line-height:11.700px;color:#8c8c8c;font-family:'Liberation Mono',monospace;transform:scaleY(1.12);transform-origin:0 8.97px">51:</div>
<div class="t" style="left:77.42px;top:598.83px;font-size:11.700px;line-height:11.700px;color:#000;font-family:'Liberation Mono',monospace;transform:scaleY(1.12);transform-origin:0 8.97px">(I. BEKEZDES)</div>
<div class="t" style="left:35.3px;top:613.83px;font-size:11.700px;line-height:11.700px;color:#8c8c8c;font-family:'Liberation Mono',monospace;transform:scaleY(1.12);transform-origin:0 8.97px">52:</div>
<div class="t" style="left:119.54px;top:613.83px;font-size:11.700px;line-height:11.700px;color:#000;font-family:'Liberation Mono',monospace;transform:scaleY(1.12);transform-origin:0 8.97px">G1 X[2*#16] Z[#3-#18]</div>
<div class="t" style="left:35.3px;top:628.83px;font-size:11.700px;line-height:11.700px;color:#d8d8d8;font-family:'Liberation Mono',monospace;transform:scaleY(1.12);transform-origin:0 8.97px">53:</div>
<div class="t" style="left:119.54px;top:628.83px;font-size:11.700px;line-height:11.700px;color:#e8e8e8;font-family:'Liberation Mono',monospace;transform:scaleY(1.12);transform-origin:0 8.97px">G33 X[2*[#19-#22]] Z[#4-#18+#21] K#20</div>
<div class="t" style="left:35.3px;top:643.83px;font-size:11.700px;line-height:11.700px;color:#8c8c8c;font-family:'Liberation Mono',monospace;transform:scaleY(1.12);transform-origin:0 8.97px">54:</div>
<div class="t" style="left:119.54px;top:643.83px;font-size:11.700px;line-height:11.700px;color:#000;font-family:'Liberation Mono',monospace;transform:scaleY(1.12);transform-origin:0 8.97px">G1 X[#2+4]</div>
<div class="t" style="left:35.3px;top:658.83px;font-size:11.700px;line-height:11.700px;color:#8c8c8c;font-family:'Liberation Mono',monospace;transform:scaleY(1.12);transform-origin:0 8.97px">55:</div>
<div class="t" style="left:119.54px;top:658.83px;font-size:11.700px;line-height:11.700px;color:#000;font-family:'Liberation Mono',monospace;transform:scaleY(1.12);transform-origin:0 8.97px">G0 X[#1+4-2*#15] Z[#3+#6/2]</div>
<div class="t" style="left:35.3px;top:673.83px;font-size:11.700px;line-height:11.700px;color:#8c8c8c;font-family:'Liberation Mono',monospace;transform:scaleY(1.12);transform-origin:0 8.97px">56:</div>
<div class="t" style="left:119.54px;top:673.83px;font-size:11.700px;line-height:11.700px;color:#000;font-family:'Liberation Mono',monospace;transform:scaleY(1.12);transform-origin:0 8.97px">G1 X[#1-2*#15]</div>
<div class="t" style="left:35.3px;top:688.83px;font-size:11.700px;line-height:11.700px;color:#8c8c8c;font-family:'Liberation Mono',monospace;transform:scaleY(1.12);transform-origin:0 8.97px">57:</div>
<div class="t" style="left:77.42px;top:688.83px;font-size:11.700px;line-height:11.700px;color:#000;font-family:'Liberation Mono',monospace;transform:scaleY(1.12);transform-origin:0 8.97px">(II. BEKEZDES)</div>
<div class="t" style="left:35.3px;top:703.83px;font-size:11.700px;line-height:11.700px;color:#8c8c8c;font-family:'Liberation Mono',monospace;transform:scaleY(1.12);transform-origin:0 8.97px">58:</div>
<div class="t" style="left:119.54px;top:703.83px;font-size:11.700px;line-height:11.700px;color:#000;font-family:'Liberation Mono',monospace;transform:scaleY(1.12);transform-origin:0 8.97px">G1 X[2*[#16-#15]] Z[#3-#18+#6/2]</div>
<div style="left:998px;top:578px;width:12px;height:137px;background:#d9d9d9"></div>
<svg style="left:998px;top:578px" width="12" height="137" viewBox="0 0 12 137">
<path d="M1 12.5 L6 1" stroke="#fff" stroke-width="1.2" fill="none"/><path d="M6 1 L11 12 M1 12 H11.5" stroke="#828282" stroke-width="1.6" fill="none"/>
<path d="M1 126 L6 136.5" stroke="#fff" stroke-width="1.2" fill="none"/><path d="M0.5 126 H11" stroke="#fff" stroke-width="1"/><path d="M11 126 L6 136.5" stroke="#828282" stroke-width="1.6" fill="none"/>
</svg>
<div style="left:999px;top:673px;width:9px;height:10px;background:#d9d9d9;border:solid;border-width:1px 2px 2px 1px;border-color:#fff #828282 #828282 #fff"></div>
<div style="left:5px;top:718px;width:113px;height:16px;background:#d9d9d9;border:2px solid;border-color:#828282 #ffffff #ffffff #828282"></div>
<div class="t" style="left:6.70px;top:722.45px;font-size:12.7px;line-height:12.7px;color:#000;font-family:'Liberation Sans', sans-serif;font-weight:normal;transform:scaleX(0.9186);transform-origin:0 0;">ON</div>
<div style="left:122px;top:718px;width:242px;height:16px;background:#d9d9d9;border:2px solid;border-color:#828282 #ffffff #ffffff #828282"></div>
<div class="t" style="left:125.20px;top:722.45px;font-size:12.7px;line-height:12.7px;color:#000;font-family:'Liberation Sans', sans-serif;font-weight:normal;transform:scaleX(1.0690);transform-origin:0 0;">Tool 12, zo 0, xo 0, dia 0.1</div>
<div style="left:368px;top:718px;width:202px;height:16px;background:#d9d9d9;border:2px solid;border-color:#828282 #ffffff #ffffff #828282"></div>
<div class="t" style="left:370.20px;top:722.95px;font-size:12.7px;line-height:12.7px;color:#000;font-family:'Liberation Sans', sans-serif;font-weight:normal;transform:scaleX(1.0486);transform-origin:0 0;">Position: Relative Actual</div>
<div style="left:0px;top:742px;width:1024px;height:26px;background:linear-gradient(#edecea,#e8e7e5)"></div>
<div style="left:0px;top:742px;width:1017px;height:1px;background:#c8c6c3"></div>
<svg style="left:3px;top:746px" width="20" height="21" viewBox="0 0 20 21">
<rect x="0.5" y="0.5" width="19" height="20" rx="3" fill="#efefef" stroke="#9a9a9a"/><rect x="3" y="4" width="14" height="13" fill="#8f2d95" stroke="#5a1560" stroke-width="0.6"/><rect x="3" y="4" width="14" height="2.5" fill="#d6d2a8"/><rect x="4.5" y="8.5" width="2.5" height="2" fill="#e4c8e8"/><rect x="4.5" y="12" width="2.5" height="2" fill="#e4c8e8"/></svg>
<svg style="left:27px;top:747px" width="6" height="19" viewBox="0 0 6 19"><rect x="1" y="1" width="1" height="1" fill="#b4b2af"/><rect x="1" y="4" width="1" height="1" fill="#b4b2af"/><rect x="1" y="7" width="1" height="1" fill="#b4b2af"/><rect x="1" y="10" width="1" height="1" fill="#b4b2af"/><rect x="1" y="13" width="1" height="1" fill="#b4b2af"/><rect x="1" y="16" width="1" height="1" fill="#b4b2af"/><rect x="4" y="1" width="1" height="1" fill="#b4b2af"/><rect x="4" y="4" width="1" height="1" fill="#b4b2af"/><rect x="4" y="7" width="1" height="1" fill="#b4b2af"/><rect x="4" y="10" width="1" height="1" fill="#b4b2af"/><rect x="4" y="13" width="1" height="1" fill="#b4b2af"/><rect x="4" y="16" width="1" height="1" fill="#b4b2af"/></svg>
<div style="left:36px;top:745px;width:197px;height:19px;border:1px solid #a9a7a4;border-radius:3px;background:linear-gradient(#f7f7f6,#e3e2e0)"></div>
<svg style="left:43px;top:748px" width="16" height="17" viewBox="0 0 16 17">
<g stroke="#fff" stroke-width="3" fill="none"><path d="M2 2.5 H6 M3.8 2.5 V11.5 M2 11.5 H6 M6.5 2.5 L15 11.5 M15 2.5 L6.5 11.5 M7 14.5 H15 M7 13 V16 M15 13 V16"/></g>
<g stroke="#000" stroke-width="1.3" fill="none"><path d="M2 2.5 H6 M3.8 2.5 V11.5 M2 11.5 H6 M6.5 2.5 L15 11.5 M15 2.5 L6.5 11.5 M7 14.5 H15 M7 13 V16 M15 13 V16"/></g></svg>
<div class="t" style="left:67.00px;top:747.36px;font-size:14.1px;line-height:14.1px;color:#1a1a1a;font-family:'Liberation Sans', sans-serif;font-weight:normal;transform:scaleX(0.9459);transform-origin:0 0;">KETBEK_G33.ngc</div>
<div style="left:889px;top:745px;width:108px;height:21px;border-radius:3px;background:#a8a5a2;overflow:hidden"></div>
<div style="left:889px;top:745px;width:26px;height:21px;background:#8eaedc"></div>
<div style="left:889px;top:745px;width:26px;height:1px;background:#5a82c0"></div>
<div style="left:942px;top:746px;width:1px;height:20px;background:#f2f2f2"></div>
<div style="left:969px;top:746px;width:1px;height:20px;background:#f2f2f2"></div>
<svg style="left:893px;top:748px" width="16" height="17" viewBox="0 0 16 17">
<g stroke="#fff" stroke-width="3" fill="none"><path d="M2 2.5 H6 M3.8 2.5 V11.5 M2 11.5 H6 M6.5 2.5 L15 11.5 M15 2.5 L6.5 11.5 M7 14.5 H15 M7 13 V16 M15 13 V16"/></g>
<g stroke="#000" stroke-width="1.3" fill="none"><path d="M2 2.5 H6 M3.8 2.5 V11.5 M2 11.5 H6 M6.5 2.5 L15 11.5 M15 2.5 L6.5 11.5 M7 14.5 H15 M7 13 V16 M15 13 V16"/></g></svg>
<svg style="left:1001px;top:745px" width="21" height="23" viewBox="0 0 21 23">
<path d="M2 4 L4 21 Q10 23 16 21 L18 4Z" fill="#d6d6d6" stroke="#8a8a8a"/><ellipse cx="10" cy="4" rx="8.5" ry="2.6" fill="#e9e9e9" stroke="#8a8a8a"/>
<path d="M5 9 L7 13 L10 10 L13 15 L15 10" stroke="#f4f4f4" stroke-width="2" fill="none"/><circle cx="17" cy="20" r="2.5" fill="#eee" stroke="#999"/></svg>
<div style="left:553px;top:162px;width:5px;height:5px;background:#000"></div>
<div style="left:553px;top:194px;width:5px;height:5px;background:#000"></div>
<div style="left:489px;top:258px;width:5px;height:5px;background:#000"></div>
<div style="left:521px;top:258px;width:5px;height:5px;background:#000"></div>
<div style="left:537px;top:258px;width:5px;height:5px;background:#000"></div>
<div style="left:553px;top:258px;width:5px;height:5px;background:#000"></div>
</body></html>
